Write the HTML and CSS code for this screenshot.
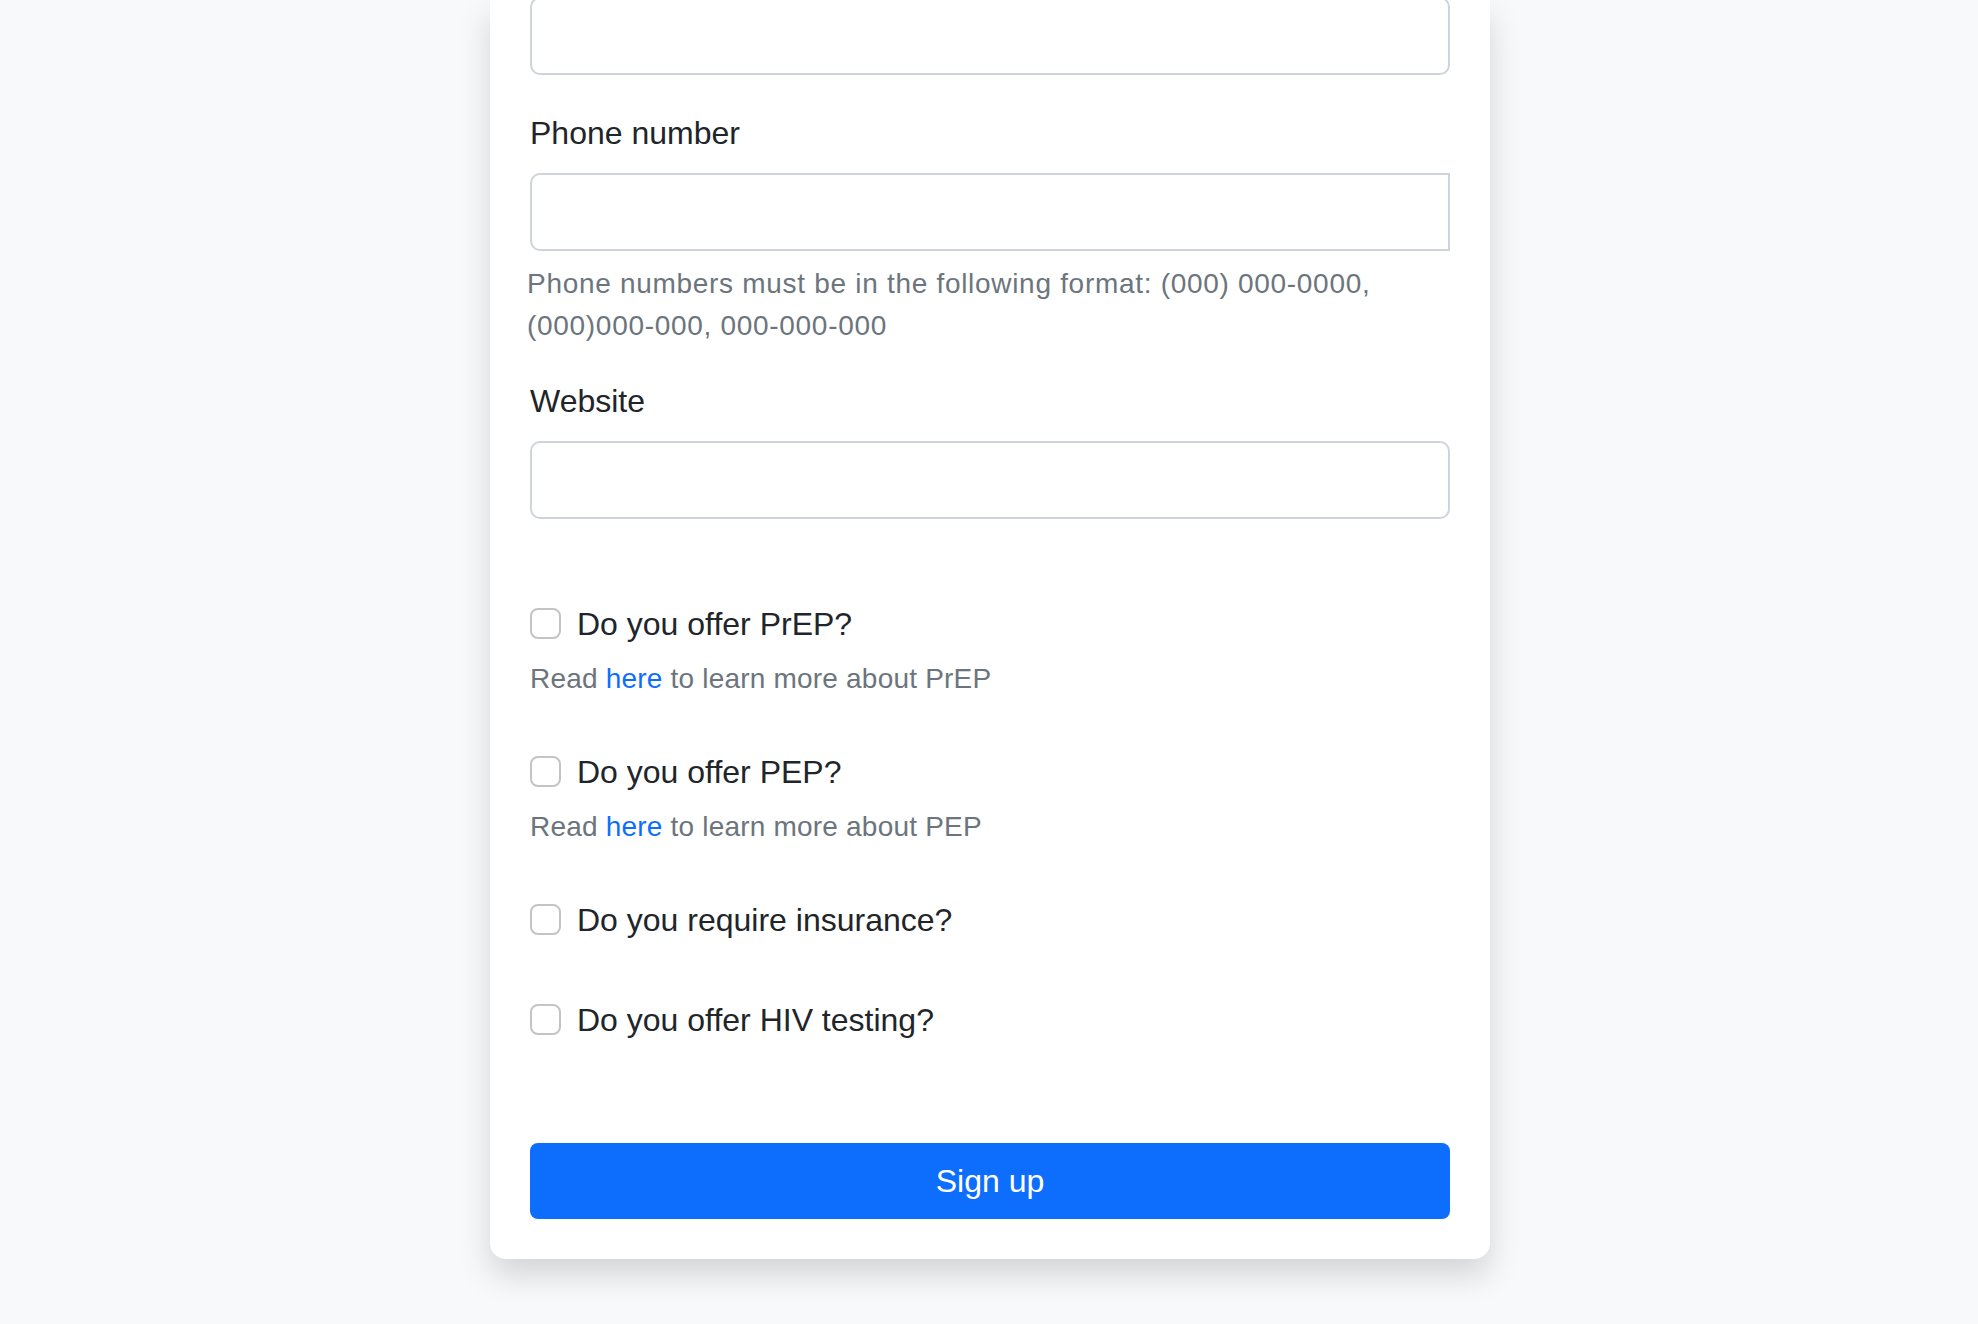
FILE: index.html
```html
<!DOCTYPE html>
<html lang="en">
<head>
<meta charset="utf-8">
<title>Sign up</title>
<link rel="stylesheet" href="styles.css">
</head>
<body>
<main class="page">
  <form class="card">
    <div class="field field-first">
      <input class="input" type="text" aria-label="Previous field">
    </div>
    <div class="field">
      <label class="label" for="phone">Phone number</label>
      <input class="input input-phone" id="phone" type="tel">
      <div class="form-text">Phone numbers must be in the following format: (000) 000-0000, (000)000-000, 000-000-000</div>
    </div>
    <div class="field">
      <label class="label" for="website">Website</label>
      <input class="input" id="website" type="url">
    </div>

    <div class="checks">
      <div class="check-block">
        <label class="check-row"><input class="check" type="checkbox"><span>Do you offer PrEP?</span></label>
        <div class="check-help">Read <a href="#">here</a> to learn more about PrEP</div>
      </div>
      <div class="check-block">
        <label class="check-row"><input class="check" type="checkbox"><span>Do you offer PEP?</span></label>
        <div class="check-help">Read <a href="#">here</a> to learn more about PEP</div>
      </div>
      <div class="check-block check-block-plain">
        <label class="check-row"><input class="check" type="checkbox"><span>Do you require insurance?</span></label>
      </div>
      <div class="check-block check-block-last">
        <label class="check-row"><input class="check" type="checkbox"><span>Do you offer HIV testing?</span></label>
      </div>
    </div>

    <button class="btn" type="submit">Sign up</button>
  </form>
</main>
</body>
</html>
```

FILE: styles.css
```css
* {
  box-sizing: border-box;
}

html, body {
  margin: 0;
  padding: 0;
}

body {
  background: #f8f9fa;
  font-family: "Liberation Sans", Arial, Helvetica, sans-serif;
  color: #212529;
  font-size: 32px;
  line-height: 1.5;
}

.page {
  padding: 0 0 64px 2px;
}

.card {
  width: 1000px;
  margin: 0 auto;
  background: #ffffff;
  border-radius: 0 0 16px 16px;
  box-shadow: 0 16px 32px rgba(0, 0, 0, 0.15);
  padding: 0 40px 40px;
  display: flex;
  flex-direction: column;
}

.field {
  display: flex;
  flex-direction: column;
}

.field-first {
  margin-top: -3px;
  margin-bottom: 34px;
}

.label {
  display: block;
  font-size: 32px;
  line-height: 48px;
  margin-bottom: 16px;
  color: #212529;
}

.input {
  display: block;
  width: 100%;
  height: 78px;
  border: 2px solid #ced4da;
  border-radius: 10px;
  background: #ffffff;
  font: inherit;
  padding: 0 24px;
  margin: 0;
  outline: none;
}

.input-phone {
  border-radius: 10px 0 0 10px;
}

.form-text {
  margin-top: 12px;
  margin-bottom: 30px;
  margin-left: -3px;
  font-size: 28px;
  line-height: 42px;
  color: #6c757d;
  letter-spacing: 0.7px;
}

.checks {
  margin-top: 81px;
  display: flex;
  flex-direction: column;
}

.check-block {
  margin-bottom: 48px;
}

.check-block-plain {
  margin-bottom: 52px;
}

.check-block-last {
  margin-bottom: 99px;
}

.check-row {
  display: flex;
  align-items: flex-start;
  gap: 16px;
  font-size: 32px;
  line-height: 48px;
  color: #212529;
}

.check {
  appearance: none;
  -webkit-appearance: none;
  flex: 0 0 auto;
  width: 31px;
  height: 31px;
  margin: 8px 0 0 0;
  border: 2px solid #c4c4c4;
  border-radius: 8px;
  background: #ffffff;
}

.check-help {
  margin-top: 10px;
  font-size: 28px;
  line-height: 42px;
  color: #6c757d;
  letter-spacing: 0.2px;
}

.check-help a {
  color: #0d6efd;
  text-decoration: none;
}

.btn {
  display: block;
  width: 100%;
  height: 76px;
  border: 0;
  border-radius: 8px;
  background: #0d6efd;
  color: #ffffff;
  font-family: inherit;
  font-size: 32px;
  line-height: 76px;
  padding: 0;
  text-align: center;
}
```
